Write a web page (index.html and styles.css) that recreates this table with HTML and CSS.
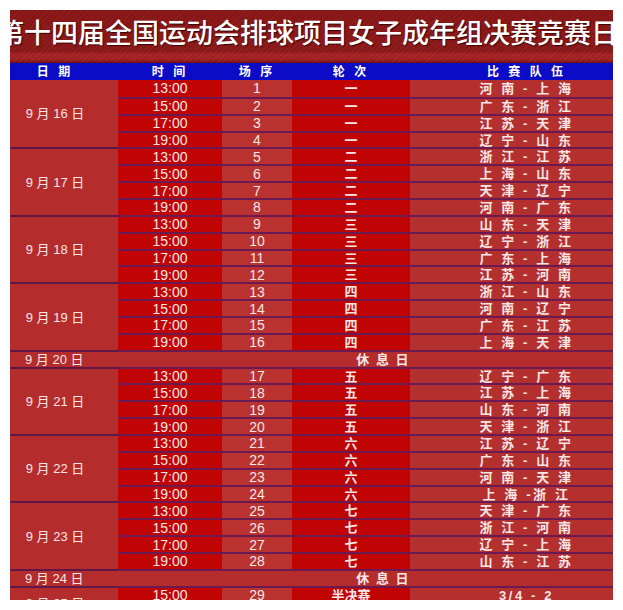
FILE: index.html
```html
<!DOCTYPE html>
<html lang="zh-CN">
<head>
<meta charset="utf-8">
<title>第十四届全国运动会排球项目女子成年组决赛竞赛日程</title>
<link rel="stylesheet" href="styles.css">
</head>
<body>
<div class="sheet">
  <div class="banner"><h1 class="title">第十四届全国运动会排球项目女子成年组决赛竞赛日程</h1></div>
  <div class="grid">
    <div class="h">日 期</div><div class="h">时 间</div><div class="h">场 序</div><div class="h">轮 次</div><div class="h hteam">比 赛 队 伍</div>

    <div class="c date g4 r1">9 月 16 日</div>
    <div class="c time r1">13:00</div><div class="c seq r1">1</div><div class="c rnd r1">一</div><div class="c team r1">河 南 - 上 海</div>
    <div class="c time">15:00</div><div class="c seq">2</div><div class="c rnd">一</div><div class="c team">广 东 - 浙 江</div>
    <div class="c time">17:00</div><div class="c seq">3</div><div class="c rnd">一</div><div class="c team">江 苏 - 天 津</div>
    <div class="c time">19:00</div><div class="c seq">4</div><div class="c rnd">一</div><div class="c team">辽 宁 - 山 东</div>

    <div class="c date g4">9 月 17 日</div>
    <div class="c time">13:00</div><div class="c seq">5</div><div class="c rnd">二</div><div class="c team">浙 江 - 江 苏</div>
    <div class="c time">15:00</div><div class="c seq">6</div><div class="c rnd">二</div><div class="c team">上 海 - 山 东</div>
    <div class="c time">17:00</div><div class="c seq">7</div><div class="c rnd">二</div><div class="c team">天 津 - 辽 宁</div>
    <div class="c time">19:00</div><div class="c seq">8</div><div class="c rnd">二</div><div class="c team">河 南 - 广 东</div>

    <div class="c date g4">9 月 18 日</div>
    <div class="c time">13:00</div><div class="c seq">9</div><div class="c rnd">三</div><div class="c team">山 东 - 天 津</div>
    <div class="c time">15:00</div><div class="c seq">10</div><div class="c rnd">三</div><div class="c team">辽 宁 - 浙 江</div>
    <div class="c time">17:00</div><div class="c seq">11</div><div class="c rnd">三</div><div class="c team">广 东 - 上 海</div>
    <div class="c time">19:00</div><div class="c seq">12</div><div class="c rnd">三</div><div class="c team">江 苏 - 河 南</div>

    <div class="c date g4">9 月 19 日</div>
    <div class="c time">13:00</div><div class="c seq">13</div><div class="c rnd">四</div><div class="c team">浙 江 - 山 东</div>
    <div class="c time">15:00</div><div class="c seq">14</div><div class="c rnd">四</div><div class="c team">河 南 - 辽 宁</div>
    <div class="c time">17:00</div><div class="c seq">15</div><div class="c rnd">四</div><div class="c team">广 东 - 江 苏</div>
    <div class="c time">19:00</div><div class="c seq">16</div><div class="c rnd">四</div><div class="c team">上 海 - 天 津</div>

    <div class="c date rest-date">9 月 20 日</div>
    <div class="c rest">休 息 日</div><div class="c restfill"></div>

    <div class="c date g4">9 月 21 日</div>
    <div class="c time">13:00</div><div class="c seq">17</div><div class="c rnd">五</div><div class="c team">辽 宁 - 广 东</div>
    <div class="c time">15:00</div><div class="c seq">18</div><div class="c rnd">五</div><div class="c team">江 苏 - 上 海</div>
    <div class="c time">17:00</div><div class="c seq">19</div><div class="c rnd">五</div><div class="c team">山 东 - 河 南</div>
    <div class="c time">19:00</div><div class="c seq">20</div><div class="c rnd">五</div><div class="c team">天 津 - 浙 江</div>

    <div class="c date g4">9 月 22 日</div>
    <div class="c time">13:00</div><div class="c seq">21</div><div class="c rnd">六</div><div class="c team">江 苏 - 辽 宁</div>
    <div class="c time">15:00</div><div class="c seq">22</div><div class="c rnd">六</div><div class="c team">广 东 - 山 东</div>
    <div class="c time">17:00</div><div class="c seq">23</div><div class="c rnd">六</div><div class="c team">河 南 - 天 津</div>
    <div class="c time">19:00</div><div class="c seq">24</div><div class="c rnd">六</div><div class="c team">上 海 -浙 江</div>

    <div class="c date g4">9 月 23 日</div>
    <div class="c time">13:00</div><div class="c seq">25</div><div class="c rnd">七</div><div class="c team">天 津 - 广 东</div>
    <div class="c time">15:00</div><div class="c seq">26</div><div class="c rnd">七</div><div class="c team">浙 江 - 河 南</div>
    <div class="c time">17:00</div><div class="c seq">27</div><div class="c rnd">七</div><div class="c team">辽 宁 - 上 海</div>
    <div class="c time">19:00</div><div class="c seq">28</div><div class="c rnd">七</div><div class="c team">山 东 - 江 苏</div>

    <div class="c date rest-date">9 月 24 日</div>
    <div class="c rest">休 息 日</div><div class="c restfill"></div>

    <div class="c date g2">9 月 25 日</div>
    <div class="c time">15:00</div><div class="c seq">29</div><div class="c rnd">半决赛</div><div class="c team">3/4 - 2</div>
    <div class="c time">19:00</div><div class="c seq">30</div><div class="c rnd">半决赛</div><div class="c team">1 - 2/3</div>
  </div>
</div>
</body>
</html>
```
FILE: styles.css
```css
html, body {
  margin: 0;
  padding: 0;
  background: #ffffff;
}

.sheet {
  margin: 10px 0 0 10px;
  width: 603px;
  height: 590px;
  overflow: hidden;
  font-family: "Liberation Sans", "Noto Sans CJK SC", sans-serif;
}

.banner {
  height: 53px;
  overflow: hidden;
  background:
    repeating-linear-gradient(45deg, rgba(0,0,0,0.06) 0 1px, rgba(255,255,255,0) 1px 3px),
    repeating-linear-gradient(-45deg, rgba(255,255,255,0.04) 0 1px, rgba(0,0,0,0) 1px 4px),
    linear-gradient(to bottom, #8a1616 0, #8c1818 78%, #a82424 84%, #a22020 94%, #6c0f12 100%);
}

.title {
  margin: 0 0 0 -13px;
  padding-top: 8px;
  font-family: "Noto Sans CJK SC", sans-serif;
  font-size: 27px;
  line-height: 27px;
  font-weight: 500;
  color: #ffffff;
  white-space: nowrap;
  text-shadow: 1px 1px 1px #3a0505;
  letter-spacing: 0;
}

.grid {
  display: grid;
  grid-template-columns: 108px 104px 70px 118px 203px;
  grid-template-rows: 17px;
  grid-auto-rows: 16.86px;
}

.h {
  background: #0c0cc6;
  color: #ffffff;
  font-size: 12px;
  font-weight: bold;
  letter-spacing: 3px;
  display: flex;
  align-items: center;
  justify-content: center;
  line-height: 1;
}

.h:first-child {
  padding-right: 18px;
}

.hteam {
  padding-left: 30px;
}

.c {
  display: flex;
  align-items: center;
  justify-content: center;
  box-sizing: border-box;
  border-top: 2px solid #6a1a52;
  color: #f7e6e6;
  font-size: 13px;
  line-height: 1;
  white-space: nowrap;
}

.c.r1 {
  border-top: none;
}

.date {
  background: #b52c2c;
  padding-right: 18px;
  border-top-color: #5e1848;
}

.g4 {
  grid-row: span 4;
}

.g2 {
  grid-row: span 2;
}

.rest-date {
  justify-content: flex-start;
  padding: 0 0 0 15px;
}

.time {
  background: #c00404;
  font-size: 14px;
}

.seq {
  background: #b93230;
  font-size: 14px;
}

.rnd {
  background: #c00404;
  font-weight: bold;
}

.team {
  background: #b4302f;
  padding-left: 30px;
  font-weight: bold;
  letter-spacing: 2.6px;
}

.rest {
  grid-column: span 3;
  background: #b52c2c;
  justify-content: flex-end;
  padding-right: 0;
  font-weight: bold;
  letter-spacing: 1.5px;
}

.restfill {
  background: #b52c2c;
}
```
